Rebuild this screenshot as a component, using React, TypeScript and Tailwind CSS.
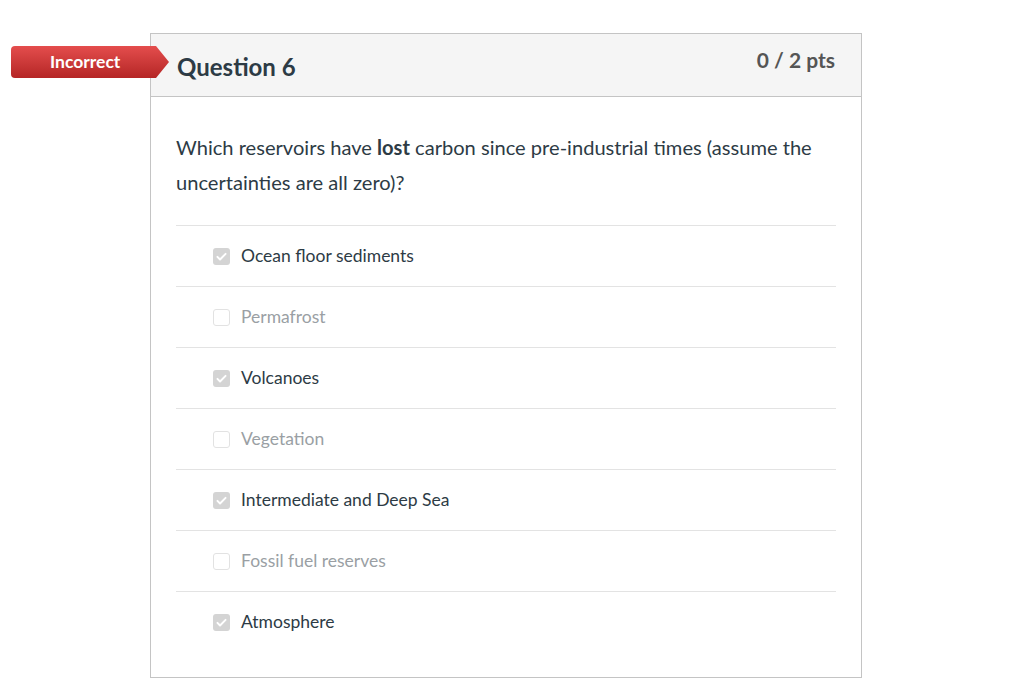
const answers = [
  { label: "Ocean floor sediments", checked: true },
  { label: "Permafrost", checked: false },
  { label: "Volcanoes", checked: true },
  { label: "Vegetation", checked: false },
  { label: "Intermediate and Deep Sea", checked: true },
  { label: "Fossil fuel reserves", checked: false },
  { label: "Atmosphere", checked: true },
];

function Checkbox({ checked }: { checked: boolean }) {
  if (checked) {
    return (
      <span className="flex h-[17px] w-[17px] items-center justify-center rounded-[3px] bg-[#d4d4d4]">
        <svg viewBox="0 0 16 16" className="h-[13px] w-[13px]">
          <path d="M3 8.5l3.2 3.2L13 4.8" fill="none" stroke="#fff" strokeWidth="2.4" strokeLinecap="round" strokeLinejoin="round" />
        </svg>
      </span>
    );
  }
  return <span className="block h-[17px] w-[17px] rounded-[3px] border border-[#e2e2e2] bg-white" />;
}

export default function App() {
  return (
    <div className="relative min-h-[681px] w-[1024px] bg-white font-['Lato',sans-serif] text-[#2d3b45]">
      {/* Incorrect flag */}
      <div className="absolute left-[11px] top-[46px] z-10 h-[32px] w-[158px] overflow-hidden rounded-l-[4px]">
        <div className="flex h-full w-full items-center pl-[39px] bg-gradient-to-b from-[#e44d4d] to-[#b52525] [clip-path:polygon(0_0,calc(100%-13px)_0,100%_50%,calc(100%-13px)_100%,0_100%)]">
          <span className="text-[17.5px] font-bold text-white">Incorrect</span>
        </div>
      </div>

      <div className="ml-[150px] pt-[33px]">
        <div className="w-[712px] border border-[#c4c4c4]">
          {/* Header */}
          <div className="flex h-[63px] items-start justify-between border-b border-[#c4c4c4] bg-[#f5f5f5] px-[26px]">
            <h2 className="pt-[18px] text-[24px] font-bold leading-[30px] text-[#2d3b45]">Question 6</h2>
            <div className="pt-[13px] text-[21px] font-bold leading-[26px] text-[#555]">0 / 2 pts</div>
          </div>

          {/* Body */}
          <div className="px-[25px] pb-[25px] pt-[33px]">
            <p className="text-[20.1px] leading-[35px]">
              Which reservoirs have <strong className="font-bold">lost</strong> carbon since pre-industrial times (assume the uncertainties are all zero)?
            </p>
            <ul className="mt-[25px]">
              {answers.map((a) => (
                <li key={a.label} className="flex h-[61px] items-center gap-[11px] border-t border-[#e3e3e3] pl-[37px]">
                  <Checkbox checked={a.checked} />
                  <span className={`text-[17.5px] ${a.checked ? "text-[#2d3b45]" : "text-[#9a9fa4]"}`}>{a.label}</span>
                </li>
              ))}
            </ul>
          </div>
        </div>
      </div>
    </div>
  );
}
